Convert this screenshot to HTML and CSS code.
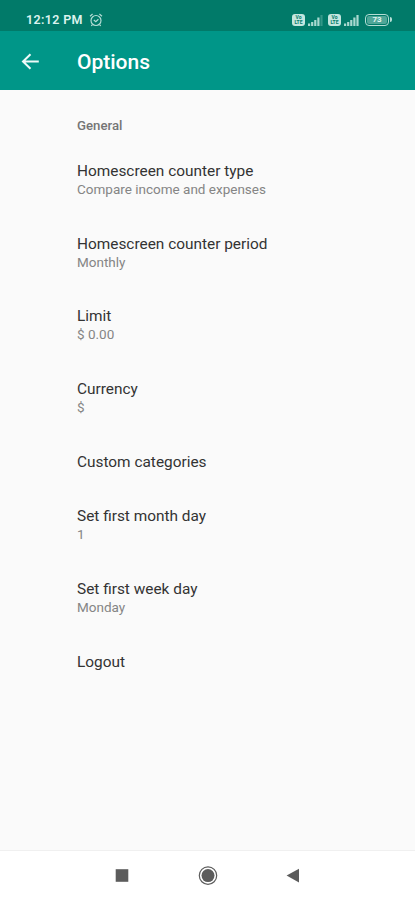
FILE: index.html
```html
<!DOCTYPE html>
<html lang="en">
<head>
    <meta charset="UTF-8">
    <title>Options</title>
    <link rel="stylesheet" href="styles.css">
</head>
<body>
    <div class="status-bar">
        <span class="time">12:12 PM</span>
        <svg class="alarm" width="14" height="14" viewBox="0 0 14 14">
            <circle cx="7" cy="7.5" r="5"/>
            <path d="M1 3.2L3.6 1M13 3.2L10.4 1M4.8 7l2 1.7 2.6-2.5M3.4 11.6L2.3 13M10.6 11.6l1.1 1.4"/>
        </svg>
        <div class="status-icons">
            <span class="volte"><span>Vo</span><span>LTE</span></span>
            <svg class="signal weak" width="15" height="12" viewBox="0 0 15 12">
                <path d="M0 9.5h2.2V12H0zM3.1 8h2.2v4H3.1zM6.2 6h2.2v6H6.2zM9.3 3.5h2.2V12H9.3z"/>
                <path class="off" d="M12.4 1h2.2v11h-2.2z"/>
            </svg>
            <span class="volte"><span>Vo</span><span>LTE</span></span>
            <svg class="signal" width="15" height="12" viewBox="0 0 15 12">
                <path d="M0 9.5h2.2V12H0zM3.1 8h2.2v4H3.1zM6.2 6h2.2v6H6.2zM9.3 3.5h2.2V12H9.3zM12.4 1h2.2v11h-2.2z"/>
            </svg>
            <span class="battery"><span>73</span></span>
        </div>
    </div>

    <header class="toolbar">
        <svg class="back" width="18" height="18" viewBox="0 0 18 18">
            <path d="M17.8 8.5H2M9.5 1.2L2 8.5l7.5 7.3"/>
        </svg>
        <h1>Options</h1>
    </header>

    <main class="options">
        <h2>General</h2>
        <div class="option">
            <div class="title">Homescreen counter type</div>
            <div class="summary">Compare income and expenses</div>
        </div>
        <div class="option">
            <div class="title">Homescreen counter period</div>
            <div class="summary">Monthly</div>
        </div>
        <div class="option">
            <div class="title">Limit</div>
            <div class="summary">$ 0.00</div>
        </div>
        <div class="option">
            <div class="title">Currency</div>
            <div class="summary">$</div>
        </div>
        <div class="option">
            <div class="title">Custom categories</div>
        </div>
        <div class="option">
            <div class="title">Set first month day</div>
            <div class="summary">1</div>
        </div>
        <div class="option">
            <div class="title">Set first week day</div>
            <div class="summary">Monday</div>
        </div>
        <div class="option">
            <div class="title">Logout</div>
        </div>
    </main>

    <nav class="nav-bar">
        <svg width="20" height="20" viewBox="0 0 20 20">
            <rect x="3.7" y="3.2" width="12.6" height="12.6"/>
        </svg>
        <svg width="20" height="20" viewBox="0 0 20 20">
            <circle class="ring" cx="10" cy="9.6" r="8.7"/>
            <circle cx="10" cy="9.6" r="6.5"/>
        </svg>
        <svg width="20" height="20" viewBox="0 0 20 20">
            <path d="M2.6 9.6L15 2.8v13.6z"/>
        </svg>
    </nav>
</body>
</html>
```

FILE: styles.css
```css
* {
    box-sizing: border-box;
}

body {
    margin: 0;
    height: 900px;
    display: flex;
    flex-direction: column;
    overflow: hidden;
    background-color: #fafafa;
    font-family: Roboto, sans-serif;
}

.status-bar {
    display: flex;
    align-items: center;
    height: 31px;
    padding: 8px 23px 0 26px;
    background-color: #017a69;
    color: #dcf3ee;
}

.time {
    font-size: 12.5px;
    font-weight: 600;
    letter-spacing: 0.35px;
}

.alarm {
    margin-left: 6px;
    fill: none;
    stroke: #b5ddd5;
    stroke-width: 1.2;
}

.status-icons {
    display: flex;
    align-items: center;
    margin-left: auto;
}

.volte {
    display: flex;
    flex-direction: column;
    justify-content: center;
    width: 13px;
    height: 12px;
    border-radius: 3px;
    background-color: #c3e6df;
    color: #017a69;
    font-size: 5px;
    font-weight: 700;
    line-height: 5px;
    text-align: center;
}

.signal {
    margin: 0 6px 0 3px;
    fill: #a9d9d0;
}

.weak {
    margin-right: 5px;
}

.off {
    opacity: 0.3;
}

.battery {
    position: relative;
    width: 24px;
    height: 12px;
    margin-right: 3px;
    padding: 1px;
    border: 1.5px solid #b5ddd5;
    border-radius: 4px;
}

.battery span {
    display: block;
    height: 100%;
    border-radius: 2px;
    background-color: #4fa698;
    color: #e4f6f2;
    font-size: 8px;
    font-weight: 700;
    line-height: 8px;
    text-align: center;
}

.battery::after {
    content: "";
    position: absolute;
    top: 2px;
    right: -4px;
    width: 2px;
    height: 5px;
    border-radius: 0 2px 2px 0;
    background-color: #b5ddd5;
}

.toolbar {
    display: flex;
    align-items: center;
    height: 59px;
    padding: 2px 21px 0;
    background-color: #009688;
    color: #fff;
}

.back {
    fill: none;
    stroke: #eefaf8;
    stroke-width: 2;
}

.toolbar h1 {
    margin: 0 0 0 38px;
    font-size: 21px;
    font-weight: 500;
}

.options {
    flex: 1;
    padding: 26px 20px 0 77px;
}

.options h2 {
    margin: 0 0 8.6px;
    font-size: 13.2px;
    font-weight: 500;
    line-height: 19px;
    color: #757575;
}

.option {
    padding: 17.35px 0;
}

.title {
    font-size: 15.4px;
    line-height: 20px;
    color: #333;
}

.summary {
    margin-bottom: 2px;
    font-size: 13.5px;
    line-height: 16px;
    color: #858585;
}

.nav-bar {
    display: flex;
    justify-content: center;
    align-items: center;
    gap: 66px;
    height: 50px;
    border-top: 1px solid #f0f0f0;
    background-color: #fff;
    fill: #5c5c5c;
}

.ring {
    fill: none;
    stroke: #5c5c5c;
    stroke-width: 1.2;
}
```
